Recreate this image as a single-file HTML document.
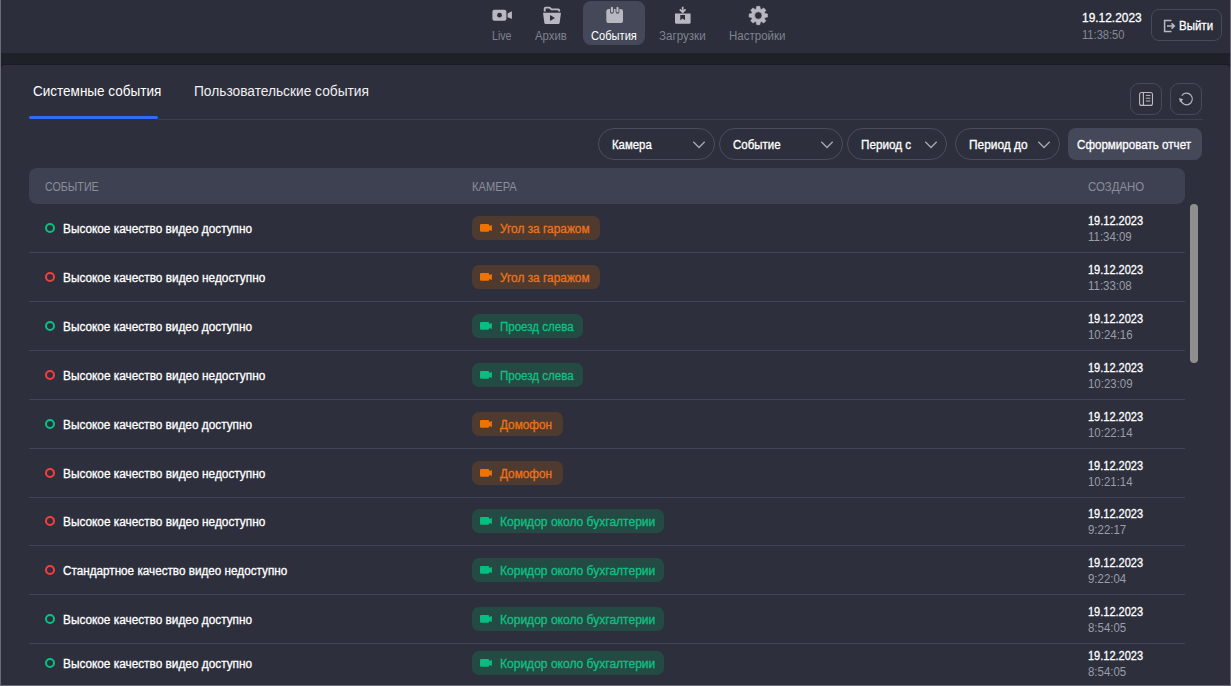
<!DOCTYPE html>
<html><head><meta charset="utf-8">
<style>
*{box-sizing:border-box;margin:0;padding:0}
html,body{width:1231px;height:686px;overflow:hidden;background:#2c2e3b}
body{position:relative;font-family:"Liberation Sans",sans-serif;color:#fff}
.a{position:absolute;white-space:nowrap}
.t{position:absolute;white-space:nowrap;transform-origin:0 0;line-height:1}
#frameL{left:0;top:0;width:1px;height:686px;background:#6d6b79}
#frameR{left:1230px;top:0;width:1px;height:686px;background:#6d6b79}
#frameB{left:0;top:685px;width:1231px;height:1px;background:#6d6b79}
#header{left:1px;top:0;width:1229px;height:53px;background:#2c2e3b}
#band{left:1px;top:53px;width:1229px;height:22px;background:#1f2129}
#panel{left:1px;top:65px;width:1229px;height:620px;background:#2d2f3c;border-radius:4px 4px 0 0;box-shadow:0 -1px 0 #1b1c23}
.nav{font-size:12px;color:#7f838f}
.navact{position:absolute;left:583px;top:1px;width:62px;height:44px;border-radius:8px;background:#454859}
.ico{position:absolute}
.btnb{position:absolute;border:1px solid #474a59;border-radius:8px}
.pill{position:absolute;top:128px;height:32px;border:1px solid #4a4d5c;border-radius:16px}
.pill .t{font-size:12px;color:#fff}
.sb{-webkit-text-stroke:0.3px currentColor}
.sep{position:absolute;height:1px;background:#424555}
.th{position:absolute;font-size:12px;color:#8b8e99}
.dot{position:absolute;width:10px;height:10px;border-radius:50%;border:2px solid #06c383}
.dot.r{border-color:#f83e3c}
.ev{font-size:12px;color:#fff;-webkit-text-stroke:0.3px currentColor}
.chip{position:absolute;height:24px;border-radius:7px}
.chip.o{background:#4f3a30}
.chip.g{background:#244a44}
.chip .t{font-size:12px;-webkit-text-stroke:0.3px currentColor}
.chip.o .t{color:#ec7419}
.chip.g .t{color:#0fc184}
.dt{font-size:12px;color:#fff;-webkit-text-stroke:0.3px currentColor}
.tm{font-size:12px;color:#9a9ea8}
</style></head><body>
<div class="a" id="header"></div>
<div class="a" id="band"></div>
<div class="a" id="panel"></div>
<div class="a" id="frameL"></div>
<div class="a" id="frameR"></div>
<div class="a" id="frameB"></div>

<!-- NAV -->
<div class="navact"></div>
<svg class="ico" style="left:0;top:0" width="1231" height="53" viewBox="0 0 1231 53">
  <g fill="#b8b9c0">
    <!-- live -->
    <rect x="492.4" y="9.8" width="14" height="11" rx="2"/>
    <path d="M507.6 13.4 L511.9 11.3 L511.9 19 L507.6 17.2 Z"/>
  </g>
  <circle cx="499.5" cy="15.2" r="2.4" fill="#2c2e3b"/>
  <!-- archive -->
  <path d="M544.7 11.5 V8.6 Q544.7 7.6 545.7 7.6 H549.6 L551.4 9.4 H558.2 Q559.2 9.4 559.2 10.4 V11.5" fill="none" stroke="#b8b9c0" stroke-width="1.9"/>
  <path d="M543.6 12.8 H560.4 Q561 12.8 560.9 13.6 L559.6 23 Q559.4 24 558.4 24 H545.6 Q544.6 24 544.4 23 L543.1 13.6 Q543 12.8 543.6 12.8 Z" fill="#b8b9c0"/>
  <path d="M550 15 L555 18 L550 21 Z" fill="#2c2e3b"/>
  <!-- calendar -->
  <rect x="606.3" y="9" width="16.7" height="14" rx="2.6" fill="#b8b9c0"/>
  <rect x="610.0" y="6.1" width="3.8" height="7.6" rx="1.9" fill="#454859"/>
  <rect x="615.6" y="6.1" width="3.8" height="7.6" rx="1.9" fill="#454859"/>
  <rect x="610.8" y="6.8" width="2.2" height="5.8" rx="1.1" fill="#b8b9c0"/>
  <rect x="616.4" y="6.8" width="2.2" height="5.8" rx="1.1" fill="#b8b9c0"/>
  <!-- download -->
  <path d="M675 13.6 H690.6 V22.3 Q690.6 23.8 689.1 23.8 H676.5 Q675 23.8 675 22.3 Z" fill="#b8b9c0"/>
  <path d="M680.3 15 H685 V20.2 L682.65 18.6 L680.3 20.2 Z" fill="#2c2e3b"/>
  <path d="M682.7 6.7 V12 M679.8 9.4 L682.7 12.3 L685.6 9.4" fill="none" stroke="#b8b9c0" stroke-width="1.7"/>
  <!-- gear -->
  <g transform="translate(758.3 15.5)">
    <path id="gear" fill="#b8b9c0" stroke="#b8b9c0" stroke-width="0.6" stroke-linejoin="round" fill-rule="evenodd" d="M-2.64 -6.37 L-2.04 -6.59 L-1.57 -9.17 L1.57 -9.17 L2.04 -6.59 L2.64 -6.37 L3.22 -6.10 L5.37 -7.59 L7.59 -5.37 L6.10 -3.22 L6.37 -2.64 L6.59 -2.04 L9.17 -1.57 L9.17 1.57 L6.59 2.04 L6.37 2.64 L6.10 3.22 L7.59 5.37 L5.37 7.59 L3.22 6.10 L2.64 6.37 L2.04 6.59 L1.57 9.17 L-1.57 9.17 L-2.04 6.59 L-2.64 6.37 L-3.22 6.10 L-5.37 7.59 L-7.59 5.37 L-6.10 3.22 L-6.37 2.64 L-6.59 2.04 L-9.17 1.57 L-9.17 -1.57 L-6.59 -2.04 L-6.37 -2.64 L-6.10 -3.22 L-7.59 -5.37 L-5.37 -7.59 L-3.22 -6.10 Z M3.7 0 A3.7 3.7 0 1 0 -3.7 0 A3.7 3.7 0 1 0 3.7 0 Z"/>
  </g>
</svg>
<div class="t nav" style="left:492px;top:29.7px;transform:scaleX(0.882)">Live</div>
<div class="t nav" style="left:535px;top:29.7px;transform:scaleX(0.944)">Архив</div>
<div class="t nav" style="left:591px;top:29.7px;color:#fff;transform:scaleX(0.926)">События</div>
<div class="t nav" style="left:659px;top:29.7px;transform:scaleX(0.965)">Загрузки</div>
<div class="t nav" style="left:729px;top:29.7px;transform:scaleX(0.959)">Настройки</div>

<!-- header right -->
<div class="t" style="left:1082px;top:12.2px;font-size:12.5px;-webkit-text-stroke:0.3px #fff;color:#fff;transform:scaleX(0.954)">19.12.2023</div>
<div class="t" style="left:1082px;top:28.5px;font-size:12.5px;color:#868a94;transform:scaleX(0.890)">11:38:50</div>
<div class="btnb" style="left:1151px;top:9px;width:71px;height:32px"></div>
<svg class="ico" style="left:1158px;top:14px" width="24" height="24" viewBox="0 0 24 24">
  <path d="M13.5 6.4 H6.6 V17.5 H13.5" fill="none" stroke="#b8b9c0" stroke-width="1.5"/>
  <path d="M9 12 H16 M13.5 9.3 L16.3 12 L13.5 14.7" fill="none" stroke="#b8b9c0" stroke-width="1.6"/>
</svg>
<div class="t" style="left:1179px;top:19.8px;font-size:12.5px;-webkit-text-stroke:0.3px #fff;color:#fff;transform:scaleX(0.920)">Выйти</div>

<!-- tabs -->
<div class="t" style="left:33px;top:84.1px;font-size:14px;color:#fff;transform:scaleX(0.965)">Системные события</div>
<div class="t" style="left:194px;top:84.1px;font-size:14px;color:#f0f0f2;transform:scaleX(0.981)">Пользовательские события</div>
<div class="a" style="left:29px;top:116px;width:129px;height:3px;border-radius:2px;background:#316af5"></div>
<div class="sep" style="left:158px;top:119px;width:1045px;background:#3c3f4e"></div>

<div class="btnb" style="left:1130px;top:83px;width:32px;height:32px;border-radius:9px"></div>
<div class="btnb" style="left:1170px;top:83px;width:32px;height:32px;border-radius:9px"></div>
<svg class="ico" style="left:1130px;top:83px" width="80" height="32" viewBox="0 0 80 32">
  <rect x="9.6" y="9.5" width="12.9" height="12.9" rx="2" fill="none" stroke="#b8b9c0" stroke-width="1.1"/>
  <path d="M13.4 9.5 V22.4" stroke="#b8b9c0" stroke-width="1.2"/>
  <path d="M15.8 12.4 H20.4 M15.8 15.2 H20.4 M15.8 18 H20.4" stroke="#b8b9c0" stroke-width="1"/>
  <path d="M51.75 12.67 A5.8 5.8 0 1 1 50.9 17.5" fill="none" stroke="#b8b9c0" stroke-width="1.2"/>
  <path d="M49.1 15.1 L53.3 16.3 L49.9 19.3 Z" fill="#b8b9c0"/>
</svg>

<!-- filters -->
<div class="pill" style="left:598px;width:117px"><div class="t sb" style="left:13px;top:9.8px;transform:scaleX(0.947)">Камера</div></div>
<div class="pill" style="left:719px;width:124px"><div class="t sb" style="left:13px;top:9.8px;transform:scaleX(0.956)">Событие</div></div>
<div class="pill" style="left:847px;width:100px"><div class="t sb" style="left:13px;top:9.8px;transform:scaleX(0.975)">Период с</div></div>
<div class="pill" style="left:955px;width:105px"><div class="t sb" style="left:13px;top:9.8px;transform:scaleX(0.990)">Период до</div></div>
<svg class="ico" style="left:0;top:128.7px" width="1231" height="32" viewBox="0 0 1231 32">
  <g fill="none" stroke="#a3a6b0" stroke-width="1.4">
    <path d="M693.3 12.8 L699 18.5 L704.7 12.8"/>
    <path d="M821.3 12.8 L827 18.5 L832.7 12.8"/>
    <path d="M925.3 12.8 L931 18.5 L936.7 12.8"/>
    <path d="M1038.3 12.8 L1044 18.5 L1049.7 12.8"/>
  </g>
</svg>
<div class="a" style="left:1068px;top:128px;width:134px;height:32px;border-radius:8px;background:#454859"></div>
<div class="t" style="left:1077px;top:139px;font-size:12.5px;-webkit-text-stroke:0.3px #fff;color:#fff;transform:scaleX(0.929)">Сформировать отчет</div>

<!-- table header -->
<div class="a" style="left:29px;top:168px;width:1156px;height:36px;border-radius:8px;background:#3e4152"></div>
<div class="t th" style="left:45px;top:181.1px;transform:scaleX(0.893)">СОБЫТИЕ</div>
<div class="t th" style="left:472px;top:181.1px;transform:scaleX(0.929)">КАМЕРА</div>
<div class="t th" style="left:1088px;top:181.1px;transform:scaleX(0.951)">СОЗДАНО</div>

<!-- scrollbar -->
<div class="a" style="left:1190px;top:204px;width:8px;height:159px;border-radius:4px;background:#8f8f8f"></div>

<div class="sep" style="left:29px;top:252px;width:1156px"></div>
<div class="dot" style="left:45px;top:223px"></div>
<div class="t ev" style="left:63px;top:223px;transform:scaleX(0.985)">Высокое качество видео доступно</div>
<div class="chip o" style="left:472px;top:216px;width:127.5px"><svg class="ico" style="left:7.8px;top:7.8px" width="12" height="9" viewBox="0 0 12 9"><path d="M0 1.2 Q0 0 1.2 0 H8 Q9.2 0 9.2 1.2 V1.9 L11.9 0.9 V7 L9.2 6 V6.6 Q9.2 7.8 8 7.8 H1.2 Q0 7.8 0 6.6 Z" fill="#ef7300"/></svg><div class="t" style="left:28px;top:7px;transform:scaleX(0.990)">Угол за гаражом</div></div>
<div class="t dt" style="left:1088px;top:215px;transform:scaleX(0.916)">19.12.2023</div>
<div class="t tm" style="left:1088px;top:231px;transform:scaleX(0.954)">11:34:09</div>
<div class="sep" style="left:29px;top:301px;width:1156px"></div>
<div class="dot r" style="left:45px;top:272px"></div>
<div class="t ev" style="left:63px;top:272px;transform:scaleX(0.987)">Высокое качество видео недоступно</div>
<div class="chip o" style="left:472px;top:265px;width:127.5px"><svg class="ico" style="left:7.8px;top:7.8px" width="12" height="9" viewBox="0 0 12 9"><path d="M0 1.2 Q0 0 1.2 0 H8 Q9.2 0 9.2 1.2 V1.9 L11.9 0.9 V7 L9.2 6 V6.6 Q9.2 7.8 8 7.8 H1.2 Q0 7.8 0 6.6 Z" fill="#ef7300"/></svg><div class="t" style="left:28px;top:7px;transform:scaleX(0.990)">Угол за гаражом</div></div>
<div class="t dt" style="left:1088px;top:264px;transform:scaleX(0.916)">19.12.2023</div>
<div class="t tm" style="left:1088px;top:280px;transform:scaleX(0.954)">11:33:08</div>
<div class="sep" style="left:29px;top:350px;width:1156px"></div>
<div class="dot" style="left:45px;top:321px"></div>
<div class="t ev" style="left:63px;top:321px;transform:scaleX(0.985)">Высокое качество видео доступно</div>
<div class="chip g" style="left:472px;top:314px;width:110.5px"><svg class="ico" style="left:7.8px;top:7.8px" width="12" height="9" viewBox="0 0 12 9"><path d="M0 1.2 Q0 0 1.2 0 H8 Q9.2 0 9.2 1.2 V1.9 L11.9 0.9 V7 L9.2 6 V6.6 Q9.2 7.8 8 7.8 H1.2 Q0 7.8 0 6.6 Z" fill="#05bf80"/></svg><div class="t" style="left:28px;top:7px;transform:scaleX(0.961)">Проезд слева</div></div>
<div class="t dt" style="left:1088px;top:313px;transform:scaleX(0.916)">19.12.2023</div>
<div class="t tm" style="left:1088px;top:329px;transform:scaleX(0.954)">10:24:16</div>
<div class="sep" style="left:29px;top:399px;width:1156px"></div>
<div class="dot r" style="left:45px;top:370px"></div>
<div class="t ev" style="left:63px;top:370px;transform:scaleX(0.987)">Высокое качество видео недоступно</div>
<div class="chip g" style="left:472px;top:363px;width:110.5px"><svg class="ico" style="left:7.8px;top:7.8px" width="12" height="9" viewBox="0 0 12 9"><path d="M0 1.2 Q0 0 1.2 0 H8 Q9.2 0 9.2 1.2 V1.9 L11.9 0.9 V7 L9.2 6 V6.6 Q9.2 7.8 8 7.8 H1.2 Q0 7.8 0 6.6 Z" fill="#05bf80"/></svg><div class="t" style="left:28px;top:7px;transform:scaleX(0.961)">Проезд слева</div></div>
<div class="t dt" style="left:1088px;top:362px;transform:scaleX(0.916)">19.12.2023</div>
<div class="t tm" style="left:1088px;top:378px;transform:scaleX(0.954)">10:23:09</div>
<div class="sep" style="left:29px;top:448px;width:1156px"></div>
<div class="dot" style="left:45px;top:419px"></div>
<div class="t ev" style="left:63px;top:419px;transform:scaleX(0.985)">Высокое качество видео доступно</div>
<div class="chip o" style="left:472px;top:412px;width:90.5px"><svg class="ico" style="left:7.8px;top:7.8px" width="12" height="9" viewBox="0 0 12 9"><path d="M0 1.2 Q0 0 1.2 0 H8 Q9.2 0 9.2 1.2 V1.9 L11.9 0.9 V7 L9.2 6 V6.6 Q9.2 7.8 8 7.8 H1.2 Q0 7.8 0 6.6 Z" fill="#ef7300"/></svg><div class="t" style="left:28px;top:7px;transform:scaleX(0.983)">Домофон</div></div>
<div class="t dt" style="left:1088px;top:411px;transform:scaleX(0.916)">19.12.2023</div>
<div class="t tm" style="left:1088px;top:427px;transform:scaleX(0.954)">10:22:14</div>
<div class="sep" style="left:29px;top:497px;width:1156px"></div>
<div class="dot r" style="left:45px;top:468px"></div>
<div class="t ev" style="left:63px;top:468px;transform:scaleX(0.987)">Высокое качество видео недоступно</div>
<div class="chip o" style="left:472px;top:461px;width:90.5px"><svg class="ico" style="left:7.8px;top:7.8px" width="12" height="9" viewBox="0 0 12 9"><path d="M0 1.2 Q0 0 1.2 0 H8 Q9.2 0 9.2 1.2 V1.9 L11.9 0.9 V7 L9.2 6 V6.6 Q9.2 7.8 8 7.8 H1.2 Q0 7.8 0 6.6 Z" fill="#ef7300"/></svg><div class="t" style="left:28px;top:7px;transform:scaleX(0.983)">Домофон</div></div>
<div class="t dt" style="left:1088px;top:460px;transform:scaleX(0.916)">19.12.2023</div>
<div class="t tm" style="left:1088px;top:476px;transform:scaleX(0.954)">10:21:14</div>
<div class="sep" style="left:29px;top:545px;width:1156px"></div>
<div class="dot r" style="left:45px;top:516px"></div>
<div class="t ev" style="left:63px;top:516px;transform:scaleX(0.987)">Высокое качество видео недоступно</div>
<div class="chip g" style="left:472px;top:509px;width:192px"><svg class="ico" style="left:7.8px;top:7.8px" width="12" height="9" viewBox="0 0 12 9"><path d="M0 1.2 Q0 0 1.2 0 H8 Q9.2 0 9.2 1.2 V1.9 L11.9 0.9 V7 L9.2 6 V6.6 Q9.2 7.8 8 7.8 H1.2 Q0 7.8 0 6.6 Z" fill="#05bf80"/></svg><div class="t" style="left:28px;top:7px;transform:scaleX(1.003)">Коридор около бухгалтерии</div></div>
<div class="t dt" style="left:1088px;top:508px;transform:scaleX(0.916)">19.12.2023</div>
<div class="t tm" style="left:1088px;top:524px;transform:scaleX(0.954)">9:22:17</div>
<div class="sep" style="left:29px;top:594px;width:1156px"></div>
<div class="dot r" style="left:45px;top:565px"></div>
<div class="t ev" style="left:63px;top:565px;transform:scaleX(0.976)">Стандартное качество видео недоступно</div>
<div class="chip g" style="left:472px;top:558px;width:192px"><svg class="ico" style="left:7.8px;top:7.8px" width="12" height="9" viewBox="0 0 12 9"><path d="M0 1.2 Q0 0 1.2 0 H8 Q9.2 0 9.2 1.2 V1.9 L11.9 0.9 V7 L9.2 6 V6.6 Q9.2 7.8 8 7.8 H1.2 Q0 7.8 0 6.6 Z" fill="#05bf80"/></svg><div class="t" style="left:28px;top:7px;transform:scaleX(1.003)">Коридор около бухгалтерии</div></div>
<div class="t dt" style="left:1088px;top:557px;transform:scaleX(0.916)">19.12.2023</div>
<div class="t tm" style="left:1088px;top:573px;transform:scaleX(0.954)">9:22:04</div>
<div class="sep" style="left:29px;top:643px;width:1156px"></div>
<div class="dot" style="left:45px;top:614px"></div>
<div class="t ev" style="left:63px;top:614px;transform:scaleX(0.985)">Высокое качество видео доступно</div>
<div class="chip g" style="left:472px;top:607px;width:192px"><svg class="ico" style="left:7.8px;top:7.8px" width="12" height="9" viewBox="0 0 12 9"><path d="M0 1.2 Q0 0 1.2 0 H8 Q9.2 0 9.2 1.2 V1.9 L11.9 0.9 V7 L9.2 6 V6.6 Q9.2 7.8 8 7.8 H1.2 Q0 7.8 0 6.6 Z" fill="#05bf80"/></svg><div class="t" style="left:28px;top:7px;transform:scaleX(1.003)">Коридор около бухгалтерии</div></div>
<div class="t dt" style="left:1088px;top:606px;transform:scaleX(0.916)">19.12.2023</div>
<div class="t tm" style="left:1088px;top:622px;transform:scaleX(0.954)">8:54:05</div>
<div class="dot" style="left:45px;top:658px"></div>
<div class="t ev" style="left:63px;top:658px;transform:scaleX(0.985)">Высокое качество видео доступно</div>
<div class="chip g" style="left:472px;top:651px;width:192px"><svg class="ico" style="left:7.8px;top:7.8px" width="12" height="9" viewBox="0 0 12 9"><path d="M0 1.2 Q0 0 1.2 0 H8 Q9.2 0 9.2 1.2 V1.9 L11.9 0.9 V7 L9.2 6 V6.6 Q9.2 7.8 8 7.8 H1.2 Q0 7.8 0 6.6 Z" fill="#05bf80"/></svg><div class="t" style="left:28px;top:7px;transform:scaleX(1.003)">Коридор около бухгалтерии</div></div>
<div class="t dt" style="left:1088px;top:650px;transform:scaleX(0.916)">19.12.2023</div>
<div class="t tm" style="left:1088px;top:666px;transform:scaleX(0.954)">8:54:05</div>
</body></html>
